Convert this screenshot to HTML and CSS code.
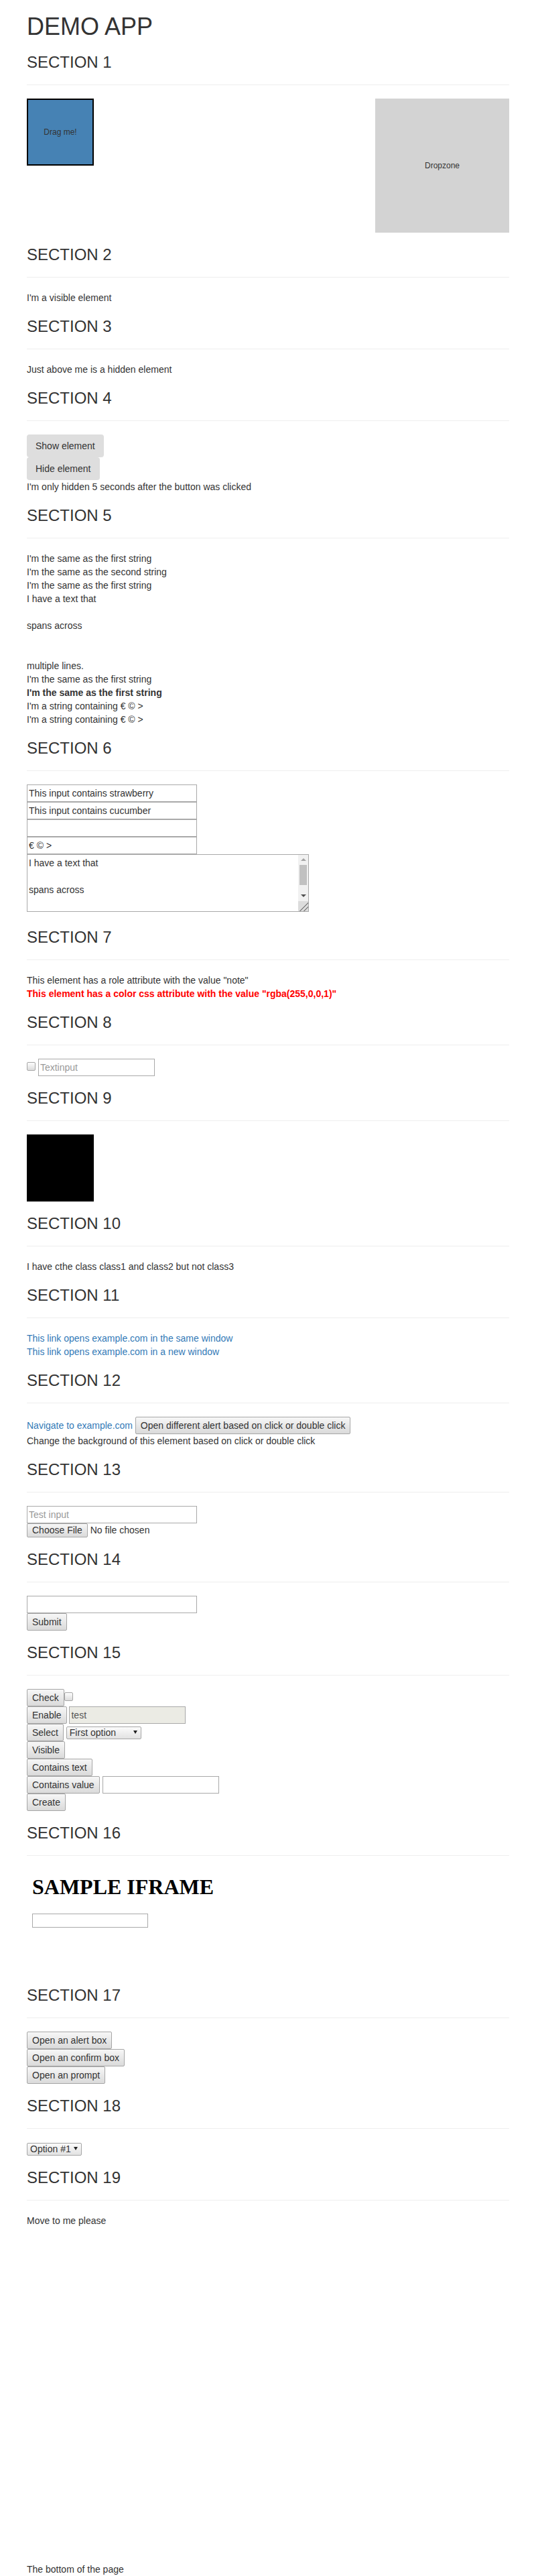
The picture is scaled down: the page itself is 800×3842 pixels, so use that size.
FILE: index.html
```html
<!DOCTYPE html>
<html lang="en">
<head>
<meta charset="utf-8">
<title>Demo app</title>
<link rel="stylesheet" href="styles.css">
</head>
<body>
<div class="container">
  <h1>DEMO APP</h1>

  <h3>SECTION 1</h3>
  <hr>
  <div class="dnd">
    <div class="drag">Drag me!</div>
    <div class="drop">Dropzone</div>
  </div>

  <h3>SECTION 2</h3>
  <hr>
  <div>I'm a visible element</div>

  <h3>SECTION 3</h3>
  <hr>
  <div>Just above me is a hidden element</div>

  <h3>SECTION 4</h3>
  <hr>
  <div class="stack">
    <button class="btn-gray">Show element</button>
    <button class="btn-gray">Hide element</button>
  </div>
  <div>I'm only hidden 5 seconds after the button was clicked</div>

  <h3>SECTION 5</h3>
  <hr>
  <div>I'm the same as the first string</div>
  <div>I'm the same as the second string</div>
  <div>I'm the same as the first string</div>
  <div class="multiline">I have a text that

spans across


multiple lines.</div>
  <div>I'm the same as the first string</div>
  <div class="bold">I'm the same as the first string</div>
  <div>I'm a string containing € © &gt;</div>
  <div>I'm a string containing € © &gt;</div>

  <h3>SECTION 6</h3>
  <hr>
  <input class="field wide block" type="text" value="This input contains strawberry">
  <input class="field wide block" type="text" value="This input contains cucumber">
  <input class="field wide block" type="text" value="">
  <input class="field wide block" type="text" value="€ © &gt;">
  <div class="area-row">
    <div class="area-wrap">
      <textarea class="area" rows="4">I have a text that

spans across


multiple lines.</textarea>
      <div class="fake-sb" aria-hidden="true">
        <span class="sb-btn"><span class="tri-up"></span></span>
        <span class="sb-thumb"></span>
        <span class="sb-fill"></span>
        <span class="sb-btn"><span class="tri-down"></span></span>
      </div>
    </div>
  </div>

  <h3>SECTION 7</h3>
  <hr>
  <div role="note">This element has a role attribute with the value "note"</div>
  <div class="red">This element has a color css attribute with the value "rgba(255,0,0,1)"</div>

  <h3>SECTION 8</h3>
  <hr>
  <div><input class="chk" type="checkbox"> <input class="field" type="text" placeholder="Textinput"></div>

  <h3>SECTION 9</h3>
  <hr>
  <div class="black"></div>

  <h3>SECTION 10</h3>
  <hr>
  <div class="class1 class2">I have cthe class class1 and class2 but not class3</div>

  <h3>SECTION 11</h3>
  <hr>
  <div><a href="#">This link opens example.com in the same window</a></div>
  <div><a href="#">This link opens example.com in a new window</a></div>

  <h3>SECTION 12</h3>
  <hr>
  <div><a href="#">Navigate to example.com</a> <button class="nbtn">Open different alert based on click or double click</button></div>
  <div>Change the background of this element based on click or double click</div>

  <h3>SECTION 13</h3>
  <hr>
  <div><input class="field wide" type="text" placeholder="Test input"></div>
  <input class="file" type="file">

  <h3>SECTION 14</h3>
  <hr>
  <div><input class="field wide" type="text"></div>
  <div><button class="nbtn">Submit</button></div>

  <h3>SECTION 15</h3>
  <hr>
  <div><button class="nbtn">Check</button><input class="chk" type="checkbox"></div>
  <div><button class="nbtn">Enable</button> <input class="field" type="text" value="test" disabled></div>
  <div><button class="nbtn">Select</button> <span class="sel"><select class="menu menu-wide"><option>First option</option><option>Second option</option></select></span></div>
  <div><button class="nbtn">Visible</button></div>
  <div><button class="nbtn">Contains text</button></div>
  <div><button class="nbtn">Contains value</button> <input class="field" type="text"></div>
  <div><button class="nbtn">Create</button></div>

  <h3>SECTION 16</h3>
  <hr>
  <div class="frame">
    <h1>SAMPLE IFRAME</h1>
    <input class="frame-input" type="text">
  </div>

  <h3>SECTION 17</h3>
  <hr>
  <div><button class="nbtn">Open an alert box</button></div>
  <div><button class="nbtn">Open an confirm box</button></div>
  <div><button class="nbtn">Open an prompt</button></div>

  <h3>SECTION 18</h3>
  <hr>
  <div><span class="sel"><select class="menu menu-small"><option>Option #1</option><option>Option #2</option></select></span></div>

  <h3>SECTION 19</h3>
  <hr>
  <div>Move to me please</div>
  <div class="bottom">The bottom of the page</div>
</div>
</body>
</html>
```

FILE: styles.css
```css
html {
  background: #fff;
}

body {
  margin: 0;
  font-family: "Liberation Sans", Arial, Helvetica, sans-serif;
  font-size: 14px;
  line-height: 20px;
  color: #333;
}

.container {
  width: 750px;
  box-sizing: border-box;
  padding: 0 15px;
  margin: 0 auto;
}

h1 {
  font-size: 36px;
  line-height: 39.6px;
  font-weight: 500;
  margin: 20px 0 10px;
}

h3 {
  font-size: 24px;
  line-height: 26px;
  font-weight: 500;
  margin: 20px 0 10px;
}

hr {
  height: 0;
  margin: 20px 0;
  border: 0;
  border-top: 1px solid #eee;
}

a {
  color: #337ab7;
  text-decoration: none;
}

/* Section 1 */
.dnd {
  display: flex;
  justify-content: space-between;
  align-items: flex-start;
  font-size: 12px;
}

.drag {
  width: 100px;
  height: 100px;
  box-sizing: border-box;
  border: 2px solid #000;
  background: #4682b4;
  display: flex;
  align-items: center;
  justify-content: center;
}

.drop {
  width: 200px;
  height: 200px;
  background: #d3d3d3;
  display: flex;
  align-items: center;
  justify-content: center;
}

/* Section 4 */
.stack {
  display: flex;
  flex-direction: column;
  align-items: flex-start;
}

.btn-gray {
  font: inherit;
  color: #333;
  margin: 0;
  padding: 6px 12px;
  border: 1px solid transparent;
  border-radius: 4px;
  background: #dedede;
}

/* Section 5 */
.multiline {
  white-space: pre-line;
}

.bold {
  font-weight: bold;
}

/* inputs */
.field {
  font: inherit;
  color: #333;
  box-sizing: border-box;
  width: 174px;
  height: 26px;
  margin: 0;
  padding: 2px 2px;
  border: 1px solid #a9a9a9;
  border-radius: 0;
  background: #fff;
  outline: none;
}

.field.wide {
  width: 254px;
}

.field.block {
  display: block;
}

.field::placeholder {
  color: #999;
}

.field:disabled {
  background: #ebebe4;
  color: #545454;
}

/* textarea with classic scrollbar */
.area-row {
  padding-bottom: 5px;
}

.area-wrap {
  position: relative;
  width: 421px;
}

.area {
  display: block;
  box-sizing: border-box;
  width: 421px;
  height: 86px;
  margin: 0;
  padding: 2px 18px 2px 2px;
  border: 1px solid #a9a9a9;
  font: inherit;
  color: #333;
  background: #fff;
  outline: none;
  overflow: hidden;
}

.area::-webkit-resizer {
  background-color: #dcdcdc;
  background-image: linear-gradient(135deg, transparent 55%, #8a8a8a 55%, #8a8a8a 61%, transparent 61%, transparent 75%, #8a8a8a 75%, #8a8a8a 81%, transparent 81%);
}

.fake-sb {
  position: absolute;
  top: 1px;
  right: 1px;
  bottom: 16px;
  width: 15px;
  background: #f1f1f1;
  display: flex;
  flex-direction: column;
  pointer-events: none;
}

.sb-btn {
  height: 15px;
  flex: none;
  display: flex;
  align-items: center;
  justify-content: center;
}

.tri-up {
  width: 0;
  height: 0;
  border-left: 4px solid transparent;
  border-right: 4px solid transparent;
  border-bottom: 4px solid #a3a3a3;
}

.tri-down {
  width: 0;
  height: 0;
  border-left: 4px solid transparent;
  border-right: 4px solid transparent;
  border-top: 4px solid #505050;
}

.sb-thumb {
  flex: none;
  height: 30px;
  margin: 0 2px;
  background: #c1c1c1;
}

.sb-fill {
  flex: 1;
}

/* Section 7 */
.red {
  color: #f00;
  font-weight: bold;
}

/* checkbox */
.chk {
  -webkit-appearance: none;
  appearance: none;
  box-sizing: border-box;
  width: 13px;
  height: 13px;
  margin: 4px 0 0;
  border: 1px solid #a6a6a6;
  border-radius: 2px;
  background: linear-gradient(#fdfdfd, #dcdcdc);
}

/* Section 9 */
.black {
  width: 100px;
  height: 100px;
  background: #000;
}

/* native-looking buttons */
.nbtn {
  font: inherit;
  color: #333;
  margin: 0;
  padding: 2px 7px;
  border: 1px solid #a6a6a6;
  border-radius: 2px;
  background: linear-gradient(#f7f7f7, #dadada);
}

/* file input */
.file {
  display: block;
  font: inherit;
  color: #333;
  height: 21px;
  line-height: 19px;
  margin: 0;
  padding: 0;
}

.file::file-selector-button {
  font: inherit;
  color: #333;
  height: 21px;
  line-height: 19px;
  padding: 0 7px;
  margin: 0 4px 0 0;
  border: 1px solid #a6a6a6;
  border-radius: 2px;
  background: linear-gradient(#f7f7f7, #dadada);
}

/* selects */
.sel {
  position: relative;
  display: inline-block;
}

.sel::after {
  content: "";
  position: absolute;
  right: 6px;
  top: 7px;
  border-left: 3px solid transparent;
  border-right: 3px solid transparent;
  border-top: 5px solid #222;
  pointer-events: none;
}

.menu {
  -webkit-appearance: none;
  appearance: none;
  font: inherit;
  color: #333;
  box-sizing: border-box;
  height: 19px;
  line-height: 17px;
  margin: 0;
  padding: 0 4px;
  border: 1px solid #a6a6a6;
  border-radius: 2px;
  background: linear-gradient(#fbfbfb, #e2e2e2);
  outline: none;
}

.menu-wide {
  width: 112px;
}

.menu-small {
  width: 82px;
}

/* Section 16 iframe */
.frame {
  width: 300px;
  height: 155px;
  box-sizing: border-box;
  padding: 8px;
  font-family: "Liberation Serif", "Times New Roman", serif;
  color: #000;
}

.frame h1 {
  font-family: inherit;
  font-size: 32px;
  font-weight: bold;
  line-height: normal;
  margin: 0 0 21.44px;
}

.frame-input {
  display: block;
  box-sizing: border-box;
  width: 173px;
  height: 21px;
  margin: 0;
  padding: 1px 2px;
  border: 1px solid #a9a9a9;
  font: 13.33px "Liberation Sans", Arial, sans-serif;
  background: #fff;
}

/* Section 19 */
.bottom {
  margin-top: 500px;
}
```
